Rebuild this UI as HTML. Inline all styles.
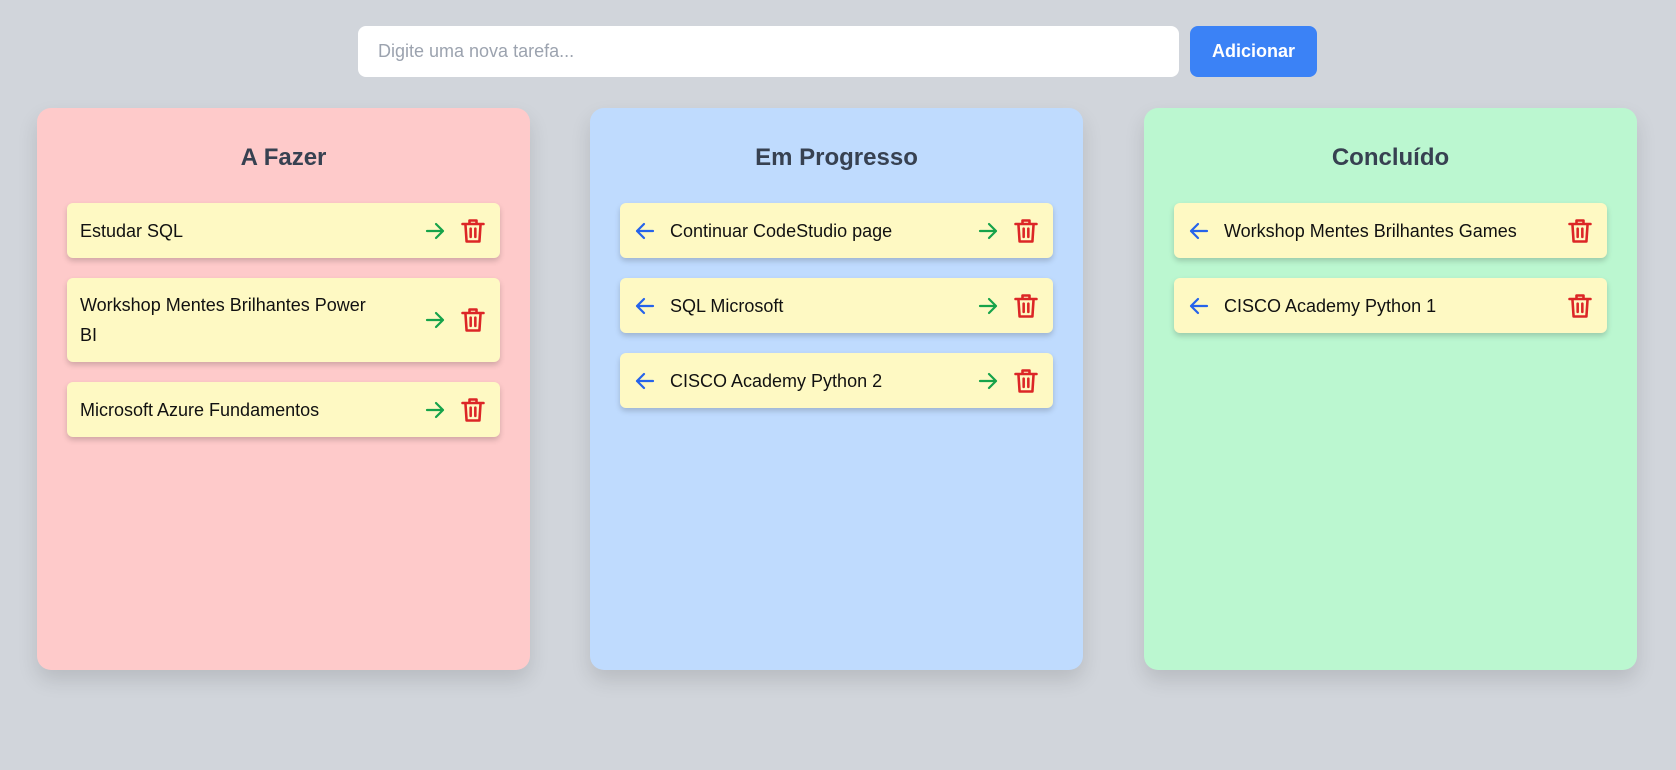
<!DOCTYPE html>
<html><head><meta charset="utf-8"><style>
*{box-sizing:border-box;margin:0;padding:0}
body{width:1676px;height:770px;background:#d1d5db;font-family:"Liberation Sans",sans-serif;position:relative;overflow:hidden}
.inp{position:absolute;left:358px;top:26px;width:821px;height:51px;background:#fff;border-radius:8px;color:#9ca3af;font-size:18px;line-height:51px;padding-left:20px}
.btn{position:absolute;left:1190px;top:26px;width:127px;height:51px;background:#3b82f6;border-radius:8px;color:#fff;font-weight:bold;font-size:18px;line-height:51px;text-align:center}
.col{position:absolute;top:108px;width:493px;height:562px;border-radius:14px;box-shadow:0 10px 20px rgba(0,0,0,.12);padding:30px}
.col h2{text-align:center;font-size:24px;color:#374151;font-weight:bold;height:65px;line-height:40px;margin-top:0}
.card{background:#fef9c3;border-radius:6px;box-shadow:0 3px 6px rgba(0,0,0,.18);margin-bottom:20px;display:flex;align-items:center;padding:0 13px;min-height:55px;font-size:18px;color:#111;line-height:30px}
.card .t{flex:1;padding:12px 0}
.card svg{flex:none}
.l{margin-right:13px}
.r{margin-right:12px}
</style></head><body>
<div class="inp">Digite uma nova tarefa...</div>
<div class="btn">Adicionar</div>
<svg width="0" height="0" style="position:absolute">
<defs>
<symbol id="ar" viewBox="0 0 24 24"><path d="M4 12h16M13 5l7 7-7 7" fill="none" stroke="#16a34a" stroke-width="2.2" stroke-linecap="round" stroke-linejoin="round"/></symbol>
<symbol id="al" viewBox="0 0 24 24"><path d="M20 12H4M11 5l-7 7 7 7" fill="none" stroke="#2563eb" stroke-width="2.2" stroke-linecap="round" stroke-linejoin="round"/></symbol>
<symbol id="tr" viewBox="0 0 24 24"><path d="M3 6h18M9 6V3h6V6M5.5 6l1 15h11l1-15M10 10v7M14 10v7" fill="none" stroke="#dc2626" stroke-width="2.2" stroke-linecap="round" stroke-linejoin="round"/></symbol>
</defs></svg>

<div class="col" style="left:37px;background:#fecaca">
<h2>A Fazer</h2>
<div class="card"><span class="t">Estudar SQL</span><svg class="r" width="24" height="24"><use href="#ar"/></svg><svg width="28" height="28"><use href="#tr"/></svg></div>
<div class="card" style="min-height:84px"><span class="t">Workshop Mentes Brilhantes Power<br>BI</span><svg class="r" width="24" height="24"><use href="#ar"/></svg><svg width="28" height="28"><use href="#tr"/></svg></div>
<div class="card"><span class="t">Microsoft Azure Fundamentos</span><svg class="r" width="24" height="24"><use href="#ar"/></svg><svg width="28" height="28"><use href="#tr"/></svg></div>
</div>

<div class="col" style="left:590px;background:#bfdbfe">
<h2>Em Progresso</h2>
<div class="card"><svg class="l" width="24" height="24"><use href="#al"/></svg><span class="t">Continuar CodeStudio page</span><svg class="r" width="24" height="24"><use href="#ar"/></svg><svg width="28" height="28"><use href="#tr"/></svg></div>
<div class="card"><svg class="l" width="24" height="24"><use href="#al"/></svg><span class="t">SQL Microsoft</span><svg class="r" width="24" height="24"><use href="#ar"/></svg><svg width="28" height="28"><use href="#tr"/></svg></div>
<div class="card"><svg class="l" width="24" height="24"><use href="#al"/></svg><span class="t">CISCO Academy Python 2</span><svg class="r" width="24" height="24"><use href="#ar"/></svg><svg width="28" height="28"><use href="#tr"/></svg></div>
</div>

<div class="col" style="left:1144px;background:#bbf7d0">
<h2>Concluído</h2>
<div class="card"><svg class="l" width="24" height="24"><use href="#al"/></svg><span class="t">Workshop Mentes Brilhantes Games</span><svg width="28" height="28"><use href="#tr"/></svg></div>
<div class="card"><svg class="l" width="24" height="24"><use href="#al"/></svg><span class="t">CISCO Academy Python 1</span><svg width="28" height="28"><use href="#tr"/></svg></div>
</div>
</body></html>
